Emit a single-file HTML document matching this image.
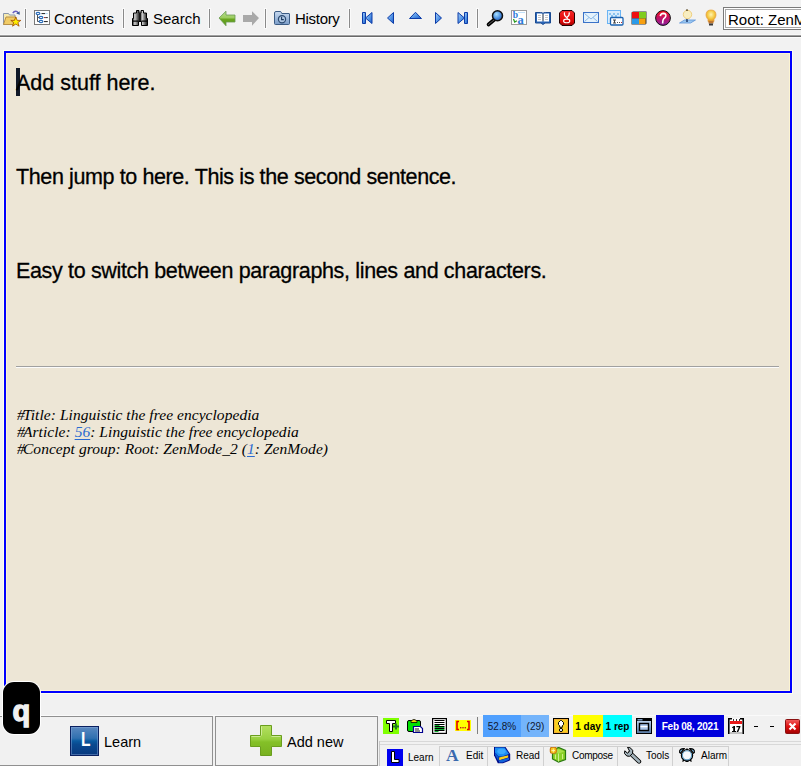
<!DOCTYPE html>
<html><head><meta charset="utf-8">
<style>
html,body{margin:0;padding:0}
body{width:801px;height:766px;position:relative;overflow:hidden;background:#f2f2f2;font-family:"Liberation Sans",sans-serif;color:#000}
.a{position:absolute}
.sep{position:absolute;top:9px;width:1px;height:19px;background:#8a8a8a;box-shadow:0 0 0 1px #fafafa}
.tl{position:absolute;top:10px;font-size:15px;line-height:18px;color:#000;white-space:nowrap}
svg{position:absolute;overflow:visible}
.st{position:absolute;font-size:10px;line-height:22px;top:715px;height:21px;padding-top:1px;text-align:center;white-space:nowrap}
.tab{position:absolute;font-size:10px;white-space:nowrap}
</style></head><body>

<!-- ===== TOOLBAR ===== -->
<div class="a" style="left:0;top:34px;width:801px;height:1px;background:#f8f8f8"></div>
<div class="a" style="left:0;top:35px;width:801px;height:1px;background:#a0a0a0"></div>
<div class="a" style="left:0;top:36px;width:801px;height:1px;background:#696969"></div>
<div class="a" style="left:0;top:37px;width:801px;height:1px;background:#fdfdfd"></div>

<div class="sep" style="left:25px"></div>
<div class="sep" style="left:123px"></div>
<div class="sep" style="left:209px"></div>
<div class="sep" style="left:265px"></div>
<div class="sep" style="left:349px"></div>
<div class="sep" style="left:477px"></div>


<!-- toolbar icons -->
<svg style="left:2px;top:8px" width="20" height="20" viewBox="0 0 20 20">
 <path d="M1.5 5.5h5l1 1.5h5.5v9.5h-11.5z" fill="#f6eab0" stroke="#8a96aa"/>
 <path d="M1.5 16.5l2.5-7.5h10l-2.5 7.5z" fill="#f2cc66" stroke="#b89048"/>
 <path d="M10.8 5.2c1.5-2.6 4.2-2.6 5.4-0.2" fill="none" stroke="#6a60c0" stroke-width="1.4"/>
 <path d="M14.2 5.6l3.4-2.4 0.2 3.6z" fill="#3a5a98"/>
 <path d="M13.8 9l1.4 3.4h3.6l-2.9 2.2 1.2 3.6-3.3-2.2-3.3 2.2 1.2-3.6-2.9-2.2h3.6z" fill="#fff000" stroke="#a04800" stroke-width="0.8" stroke-linejoin="round"/>
</svg>
<svg style="left:34px;top:10px" width="16" height="15" viewBox="0 0 16 15">
 <rect x="0.5" y="0.5" width="15" height="14" fill="#fff" stroke="#7a7a7a"/>
 <path d="M3.5 4v7.5h2" fill="none" stroke="#555"/>
 <path d="M3.5 7.5h2" fill="none" stroke="#555"/>
 <g fill="#fff" stroke="#2a6cb8" stroke-width="1.2">
 <ellipse cx="4" cy="3.5" rx="1.9" ry="1.2"/>
 <ellipse cx="7" cy="7.5" rx="1.9" ry="1.2"/>
 <ellipse cx="7" cy="11.5" rx="1.9" ry="1.2"/>
 </g>
 <rect x="7.5" y="3" width="3.5" height="1.1" fill="#333"/><rect x="11" y="3" width="2.8" height="1.1" fill="#b8d8f0"/>
 <rect x="10" y="7" width="1.2" height="1.1" fill="#c03030"/><rect x="11.2" y="7" width="2.6" height="1.1" fill="#444"/>
 <rect x="10" y="11" width="3.8" height="1.1" fill="#333"/>
</svg>
<svg style="left:132px;top:10px" width="16" height="16" viewBox="0 0 16 16">
 <defs><linearGradient id="bino" x1="0" x2="1"><stop offset="0" stop-color="#1a1a1a"/><stop offset="0.3" stop-color="#d0d0d0"/><stop offset="0.65" stop-color="#6a6a6a"/><stop offset="1" stop-color="#101010"/></linearGradient></defs>
 <path d="M4.5 0.5h2.5v2.5h1v8.5h-1.5v4h-6v-7h1v-5.5h3z" fill="url(#bino)" stroke="#000"/>
 <path d="M11.5 0.5h-2.5v2.5h-1v8.5h1.5v4h6v-7h-1v-5.5h-3z" fill="url(#bino)" stroke="#000"/>
 <rect x="7" y="3" width="2" height="8" fill="#1a1a1a"/>
 <rect x="0.5" y="10.5" width="6" height="1.2" fill="#000"/><rect x="9.5" y="10.5" width="6" height="1.2" fill="#000"/>
</svg>
<svg style="left:218px;top:10px" width="18" height="16" viewBox="0 0 18 16">
 <defs><linearGradient id="ga" x1="0" y1="0" x2="0" y2="1"><stop offset="0" stop-color="#b8e090"/><stop offset="0.45" stop-color="#9ccc60"/><stop offset="0.55" stop-color="#6aa620"/><stop offset="1" stop-color="#5a9818"/></linearGradient></defs>
 <path d="M1 8l7-6.8v3.8h9v7h-9v3.8z" fill="url(#ga)" stroke="#6a9a50" stroke-width="0.8" stroke-linejoin="round"/>
</svg>
<svg style="left:242px;top:10px" width="18" height="16" viewBox="0 0 18 16">
 <path d="M17 8l-7-6.8v3.8h-9v7h9v3.8z" fill="#a9a9a9"/>
</svg>
<svg style="left:274px;top:11px" width="16" height="14" viewBox="0 0 16 14">
 <defs><linearGradient id="hf" x1="0" y1="0" x2="0" y2="1"><stop offset="0" stop-color="#c8daf0"/><stop offset="1" stop-color="#7a9cc8"/></linearGradient></defs>
 <path d="M0.5 2q0-1.5 1.5-1.5h4q1 0 1.3 0.8l0.5 1.2h7.2q0.5 0 0.5 0.5v9.5q0 1-1 1h-13q-1 0-1-1z" fill="url(#hf)" stroke="#3c5c84"/>
 <circle cx="8" cy="8.2" r="3.6" fill="#b0c8e4" stroke="#2c4a70" stroke-width="1.2"/>
 <path d="M7.6 5.8v2.8h2.2" fill="none" stroke="#1c3a60" stroke-width="1.1"/>
</svg>
<svg style="left:361px;top:11px" width="110" height="14" viewBox="0 0 110 14">
 <defs><linearGradient id="nv" x1="0" y1="0" x2="1" y2="1"><stop offset="0" stop-color="#a8d0f8"/><stop offset="0.5" stop-color="#5a9ae8"/><stop offset="1" stop-color="#1a5cc8"/></linearGradient></defs>
 <g stroke="#0c3ca8" stroke-width="1" fill="url(#nv)" stroke-linejoin="round">
 <rect x="1.5" y="1.5" width="3" height="11"/>
 <path d="M4.5 7l6.5-5.5v11z"/>
 <path d="M26.5 7l6-5.5v11z"/>
 <path d="M48.5 7.5l6-6.2 6 6.2z"/>
 <path d="M80.5 7l-6-5.5v11z"/>
 <path d="M103.5 7l-6.5-5.5v11z"/>
 <rect x="103.5" y="1.5" width="3" height="11"/>
 </g>
</svg>
<svg style="left:486px;top:9px" width="18" height="18" viewBox="0 0 18 18">
 <defs><radialGradient id="lens" cx="0.4" cy="0.35" r="0.7"><stop offset="0" stop-color="#a8e0ff"/><stop offset="0.6" stop-color="#4a8ee0"/><stop offset="1" stop-color="#2a5aa8"/></radialGradient></defs>
 <path d="M8.5 10.5l-6 5" stroke="#000" stroke-width="3.6" stroke-linecap="round"/>
 <path d="M8 11l-5.5 4.5" stroke="#666" stroke-width="0.9" stroke-linecap="round"/>
 <circle cx="11.5" cy="6.8" r="5" fill="url(#lens)" stroke="#111" stroke-width="1.5"/>
</svg>
<svg style="left:511px;top:10px" width="16" height="15" viewBox="0 0 16 15">
 <rect x="0.5" y="0.5" width="15" height="14" fill="#fff" stroke="#9a9a9a"/>
 <rect x="7" y="2" width="7" height="1" fill="#c0e0f8"/>
 <text x="1.8" y="8" font-family="Liberation Serif" font-weight="bold" font-size="9.5" fill="#2a78d8">b</text>
 <text x="6.5" y="13.8" font-family="Liberation Serif" font-weight="bold" font-size="12.5" fill="#2a78d8">a</text>
 <path d="M2.5 9l1.2 3 2.2-1.2" fill="none" stroke="#2a9a20" stroke-width="1.3"/>
</svg>
<svg style="left:535px;top:11px" width="16" height="14" viewBox="0 0 16 14">
 <path d="M0.5 1.5h5q2 0 2.5 1 0.5-1 2.5-1h5v10.5h-5.5l-2 1.5-2-1.5h-5.5z" fill="#2a66b8" stroke="#1a4a90"/>
 <path d="M2 2.5h4.5q1 0 1 1v7h-5.5z M14 2.5h-4.5q-1 0-1 1v7h5.5z" fill="#fff"/>
 <rect x="7.3" y="3" width="1.4" height="7" fill="#888"/>
 <path d="M3 4.5h3M3 6.5h3M3 8.5h3M10 4.5h3M10 6.5h3M10 8.5h3" stroke="#b8b8b8" stroke-width="0.8"/>
</svg>
<svg style="left:559px;top:10px" width="16" height="16" viewBox="0 0 16 16">
 <defs><linearGradient id="gg" x1="0" y1="0" x2="0" y2="1"><stop offset="0" stop-color="#f42828"/><stop offset="0.7" stop-color="#e00808"/><stop offset="1" stop-color="#a00000"/></linearGradient></defs>
 <path d="M3 0.5h10l2.5 2.5v10l-2.5 2.5h-10l-2.5-2.5v-10z" fill="url(#gg)" stroke="#200000" stroke-width="1"/>
 <path d="M5.6 2.4Q4.6 5.6 7.8 7.6Q10.8 5.6 10.2 2.4" fill="none" stroke="#fff" stroke-width="1.2"/>
 <path d="M7.8 7.6L8.6 9" stroke="#fff" stroke-width="1.1"/>
 <ellipse cx="7.7" cy="10.9" rx="3.1" ry="1.8" fill="none" stroke="#fff" stroke-width="1.1"/>
</svg>
<svg style="left:583px;top:12px" width="16" height="11" viewBox="0 0 16 11">
 <rect x="0.5" y="0.5" width="15" height="10" fill="#e4f2fc" stroke="#3a72c8"/>
 <path d="M1.5 1.5l6.5 5.5 6.5-5.5M1.5 9.5l4.5-4M14.5 9.5l-4.5-4" fill="none" stroke="#8ab8e8"/>
</svg>
<svg style="left:607px;top:10px" width="17" height="16" viewBox="0 0 17 16">
 <rect x="0.5" y="0.5" width="13" height="13" fill="#d8ecfc" stroke="#6ab4f4"/>
 <path d="M2 3h2v2h-2zM6 3h2v2h-2zM10 3h2v2h-2zM4 5h2v2h-2zM8 5h2v2h-2z" fill="#8ac4f0"/>
 <rect x="3.5" y="7.5" width="12.5" height="7.5" rx="1" fill="#fff" stroke="#1a62b0" stroke-width="1.3"/>
 <path d="M6 10h3M7.5 10v3M6 13h3" stroke="#444" stroke-width="1.1"/>
 <rect x="10" y="12" width="1" height="1" fill="#555"/><rect x="12" y="12" width="1" height="1" fill="#555"/><rect x="14" y="12" width="1" height="1" fill="#c03030"/>
</svg>
<svg style="left:631px;top:11px" width="16" height="14" viewBox="0 0 16 14">
 <path d="M0.5 1.5q1-1 2-1h13v12l-1 1h-14z" fill="#333"/>
 <rect x="1" y="1" width="7" height="6.5" fill="#ee1010"/>
 <rect x="8" y="1" width="7" height="6.5" fill="#80cc20"/>
 <rect x="1" y="7.5" width="7" height="5.5" fill="#2a9ae8"/>
 <rect x="8" y="7.5" width="6.5" height="5.5" fill="#f8a010"/>
</svg>
<svg style="left:655px;top:10px" width="16" height="16" viewBox="0 0 16 16">
 <defs><linearGradient id="hp" x1="0" y1="0" x2="0" y2="1"><stop offset="0" stop-color="#ff1010"/><stop offset="0.45" stop-color="#c81060"/><stop offset="1" stop-color="#8a20a0"/></linearGradient></defs>
 <circle cx="8" cy="8" r="7.4" fill="url(#hp)" stroke="#111" stroke-width="1"/>
 <path d="M5.3 6.2Q5.6 3.4 8.4 3.4Q11.2 3.6 10.8 6Q10.4 7.6 8.8 8.6Q7.6 9.8 7.6 13.6" fill="none" stroke="#fff" stroke-width="1.6"/>
</svg>
<svg style="left:679px;top:9px" width="17" height="17" viewBox="0 0 17 17">
 <path d="M0.5 14l5-3h11l-5 3z" fill="#9cc8f0" stroke="#5a92d8" stroke-width="0.8"/>
 <rect x="7" y="10" width="2" height="3" fill="#3a5a8a"/>
 <circle cx="8.5" cy="5.5" r="4.2" fill="#f8eec0" stroke="#f0d080"/>
 <rect x="7" y="0.5" width="2" height="1.2" fill="#504020"/>
</svg>
<svg style="left:705px;top:9px" width="12" height="17" viewBox="0 0 12 17">
 <defs><radialGradient id="bl" cx="0.5" cy="0.4" r="0.6"><stop offset="0" stop-color="#fff4b0"/><stop offset="0.6" stop-color="#f4c840"/><stop offset="1" stop-color="#e09028"/></radialGradient></defs>
 <path d="M6 1q5 0 5 5 0 2.5-2 4.5v2h-6v-2q-2-2-2-4.5 0-5 5-5z" fill="url(#bl)" stroke="#e8a848" stroke-width="0.8"/>
 <rect x="3.5" y="12" width="5" height="2.5" fill="#c07830"/>
 <rect x="4" y="14.5" width="4" height="2" fill="#3a3a3a"/>
</svg>

<div class="tl" style="left:54px">Contents</div>
<div class="tl" style="left:153px">Search</div>
<div class="tl" style="left:295px;letter-spacing:-0.3px">History</div>

<!-- combo -->
<div class="a" style="left:723px;top:7px;width:90px;height:21px;border:1px solid #7a7a7a;background:#fff"></div>
<div class="a" style="left:725px;top:9px;width:90px;height:17px;border:1px solid #a8a8a8;background:#fff"></div>
<div class="tl" style="left:728px;top:11px;font-size:15px">Root: ZenMode_2</div>

<!-- ===== EDITOR ===== -->
<div class="a" style="left:3px;top:50px;width:788px;height:642px;border:1px solid #fffff0"></div>
<div class="a" style="left:4px;top:51px;width:784px;height:638px;border:2px solid #0000ff;background:#ede6d6"></div>
<div class="a" style="left:6px;top:53px;width:782px;height:636px;border:1px solid #fcf4d2;box-sizing:border-box;width:784px;height:638px"></div>

<div class="a" style="left:16px;top:68px;width:4px;height:28px;background:#101828"></div>
<div class="a" id="l1" style="left:16px;top:69px;font-size:21.5px;line-height:28px;white-space:nowrap;-webkit-text-stroke:0.3px #000">Add stuff here.</div>
<div class="a" id="l2" style="left:16px;top:163px;letter-spacing:-0.39px;font-size:21.5px;line-height:28px;white-space:nowrap;-webkit-text-stroke:0.3px #000">Then jump to here. This is the second sentence.</div>
<div class="a" id="l3" style="left:16px;top:257px;letter-spacing:-0.345px;font-size:21.5px;line-height:28px;white-space:nowrap;-webkit-text-stroke:0.3px #000">Easy to switch between paragraphs, lines and characters.</div>

<div class="a" style="left:16px;top:366px;width:763px;height:1px;background:#a0a0a0"></div>
<div class="a" style="left:16px;top:367px;width:763px;height:1px;background:#fbfbfb"></div>

<div class="a" id="ref" style="left:17px;top:406px;font-family:'Liberation Serif',serif;font-style:italic;font-size:15.5px;line-height:17px;white-space:nowrap;letter-spacing:0.05px"><span style="letter-spacing:-1.8px">#</span>Title: Linguistic the free encyclopedia<br><span style="letter-spacing:-1.8px">#</span>Article: <span style="color:#2a6ad0;text-decoration:underline;text-underline-offset:2px">56</span>: Linguistic the free encyclopedia<br><span style="letter-spacing:-1.8px">#</span>Concept group: Root: ZenMode_2 (<span style="color:#2a6ad0;text-decoration:underline;text-underline-offset:2px">1</span>: ZenMode)</div>

<!-- ===== BOTTOM ===== -->
<div class="a" style="left:0;top:694px;width:801px;height:72px;background:#f1f1f1"></div>
<div class="a" style="left:0;top:715px;width:801px;height:1px;background:#fafafa"></div>
<div class="a" style="left:0;top:716px;width:213px;height:1px;background:#909090"></div><div class="a" style="left:215px;top:716px;width:163px;height:1px;background:#909090"></div>

<!-- buttons -->
<div class="a" style="left:-1px;top:716px;width:213px;height:49px;border:1px solid #909090;border-top:none;border-left:none"></div>
<div class="a" style="left:215px;top:716px;width:161px;height:49px;border:1px solid #909090;border-top:none"></div>
<div class="a" style="left:0;top:765px;width:213px;height:1px;background:#909090"></div><div class="a" style="left:215px;top:765px;width:163px;height:1px;background:#909090"></div>

<div class="a" style="left:70px;top:726px;width:27px;height:28px;border:1px solid #0a2060;background:linear-gradient(#5a88c0,#3070b0 40%,#0a5aa0 50%,#0a4a90 62%,#08387e);box-shadow:inset 0 0 0 1px rgba(140,170,220,0.45)"></div>
<div class="a" style="left:81px;top:727px;color:#fff;font-size:19.5px;font-weight:bold;line-height:24px;transform:scaleX(0.8);transform-origin:0 0">L</div>
<div class="a" style="left:104px;top:733px;font-size:14.5px;line-height:18px">Learn</div>

<svg style="left:250px;top:725px" width="32" height="31" viewBox="0 0 32 31">
<defs><linearGradient id="pl" x1="0" y1="0" x2="0" y2="1"><stop offset="0" stop-color="#b4e060"/><stop offset="0.45" stop-color="#98d040"/><stop offset="0.55" stop-color="#84c028"/><stop offset="1" stop-color="#78b020"/></linearGradient></defs>
<path d="M10.5 0.5h11v10h10v11h-10v9h-11v-9h-10v-11h10z" fill="url(#pl)" stroke="#6a9e1e"/>
<path d="M11.5 10.5v-9M1.5 11.5h9M21.5 11.5h9" stroke="#d8f0a8" stroke-width="0.8"/>
</svg>
<div class="a" style="left:287px;top:733px;font-size:14.5px;line-height:18px">Add new</div>

<!-- q block -->
<div class="a" style="left:3px;top:682px;width:37px;height:52px;border-radius:11px;background:#000;box-shadow:0 0 0 1px #fff"></div>
<div class="a" style="left:12.5px;top:696px;width:20px;color:#f0f0f0;font-size:29px;font-weight:bold;line-height:30px;-webkit-text-stroke:1.3px #f0f0f0">q</div>

<!-- status bar -->
<div class="a" style="left:379px;top:741px;width:422px;height:1px;background:#d8d8d8"></div>
<div class="a" style="left:379px;top:744px;width:422px;height:1px;background:#d8d8d8"></div>
<div class="a" style="left:379px;top:741px;width:1px;height:25px;background:#c8c8c8"></div>
<div class="a" style="left:477px;top:717px;width:1px;height:17px;background:#808080"></div>

<div class="st" style="left:483px;width:38px;background:#50a0fe;color:#101830">52.8%</div>
<div class="st" style="left:521px;width:27px;padding-left:1px;background:#74b4fb;color:#101830">(29)</div>
<div class="st" style="left:573px;width:30px;background:#ffff00;font-weight:bold">1 day</div>
<div class="st" style="left:603px;width:29px;background:#00ffff;font-weight:bold">1 rep</div>
<div class="st" style="left:656px;width:68px;background:#0000dc;color:#fff;font-weight:bold;letter-spacing:-0.25px">Feb 08, 2021</div>
<div class="a" style="left:754px;top:726px;width:4px;height:1px;background:#000"></div>
<div class="a" style="left:770px;top:726px;width:4px;height:1px;background:#000"></div>


<!-- status icons -->
<svg style="left:383px;top:718px" width="17" height="16" viewBox="0 0 17 16">
 <rect x="0" y="0" width="16" height="16" fill="#80ff00"/>
 <path d="M3.5 2.5h9v3h-3v8h-3v-8h-3z" fill="#fff" stroke="#000"/>
 <path d="M10 8.5h6M13 5.5v6" stroke="#207a20" stroke-width="2"/>
</svg>
<svg style="left:406px;top:718px" width="18" height="16" viewBox="0 0 18 16">
 <rect x="1.5" y="2.5" width="13" height="11" rx="1.5" fill="#00e000" stroke="#000"/>
 <path d="M5 4.5h6v-1q-1-2-3-2t-3 2z" fill="#f0e000" stroke="#000" stroke-width="0.8"/>
 <path d="M7.5 8.5h7l2 2v4h-9z" fill="#fff" stroke="#000090" stroke-width="1.2"/>
 <path d="M9 11h4M9 13h5" stroke="#000" stroke-width="0.9"/>
</svg>
<svg style="left:432px;top:718px" width="15" height="16" viewBox="0 0 15 16">
 <rect x="0.6" y="0.6" width="13.8" height="14.8" fill="#fff" stroke="#000" stroke-width="1.2"/>
 <path d="M2.5 2.5h10M2.5 4.5h10M2.5 6.5h10M2.5 8.5h10M2.5 10.5h10M2.5 12.5h10" stroke="#000" stroke-width="1"/>
 <path d="M2.5 7.5h5M2.5 9.5h10M2.5 11.5h10M2.5 13.5h4" stroke="#10b030" stroke-width="1"/>
</svg>
<svg style="left:455px;top:720px" width="16" height="11" viewBox="0 0 16 11">
 <rect x="0" y="0" width="16" height="11" fill="#ffff00"/>
 <path d="M4 1.5h-2v8h2M12 1.5h2v8h-2" fill="none" stroke="#e00000" stroke-width="1.6"/>
 <rect x="5" y="7" width="1.4" height="1.4" fill="#c02020"/><rect x="7.3" y="7" width="1.4" height="1.4" fill="#c02020"/><rect x="9.6" y="7" width="1.4" height="1.4" fill="#c02020"/>
</svg>
<svg style="left:553px;top:718px" width="16" height="16" viewBox="0 0 16 16">
 <rect x="0" y="0" width="16" height="16" fill="#000"/>
 <rect x="1" y="1" width="14" height="14" fill="#f4b030"/>
 <rect x="2" y="2" width="12" height="12" fill="#f8d020"/>
 <path d="M7.5 2.5h1l2 2v2l-1.2 1.3v1.5h-2.6v-1.5l-1.2-1.3v-2z" fill="#fff" stroke="#000"/>
 <circle cx="8" cy="12" r="1.6" fill="#fff" stroke="#000"/>
</svg>
<svg style="left:636px;top:718px" width="16" height="16" viewBox="0 0 16 16">
 <defs><linearGradient id="wn" x1="0" y1="0" x2="0" y2="1"><stop offset="0" stop-color="#b8d0ea"/><stop offset="1" stop-color="#5a7ca8"/></linearGradient></defs>
 <rect x="0" y="0" width="16" height="16" fill="#000"/>
 <rect x="1" y="3" width="14" height="12" fill="url(#wn)"/>
 <rect x="1.5" y="1" width="5" height="1.5" fill="#7a9ac0"/>
 <rect x="3.5" y="5.5" width="9" height="7" fill="#a8c4e8" stroke="#000" stroke-width="1.4"/>
 <rect x="4.5" y="8" width="7" height="1.3" fill="#fff"/>
</svg>
<svg style="left:728px;top:718px" width="16" height="16" viewBox="0 0 16 16">
 <rect x="0.5" y="0.5" width="15" height="15" fill="#fff"/>
 <path d="M0.8 0v16M15.2 0v16M0 0.8h4M12 0.8h4" stroke="#000" stroke-width="1.6"/>
 <rect x="2" y="3" width="12" height="3" fill="#e81818"/>
 <rect x="5" y="1" width="1" height="2" fill="#333"/><rect x="8" y="1" width="1" height="2" fill="#333"/><rect x="11" y="1" width="1" height="2" fill="#333"/>
 <path d="M4 9.2L5.8 8H7V13H8V14H4V13H5.2V9.6L4 10.2Z M8.4 8H12.4V9L10.2 14H8.6L10.8 9.2H8.4Z" fill="#000"/>
 <rect x="2" y="14.5" width="12" height="1" fill="#888"/>
</svg>
<svg style="left:785px;top:719px" width="15" height="15" viewBox="0 0 15 15">
 <defs><linearGradient id="cl" x1="0" y1="0" x2="0" y2="1"><stop offset="0" stop-color="#f06060"/><stop offset="0.5" stop-color="#e01010"/><stop offset="1" stop-color="#a00000"/></linearGradient></defs>
 <rect x="0.5" y="0.5" width="14" height="14" rx="1" fill="url(#cl)" stroke="#8a1010"/>
 <path d="M4.5 4.5l6 6M10.5 4.5l-6 6" stroke="#fff" stroke-width="2.2"/>
</svg>

<!-- tab icons -->
<svg style="left:387px;top:749px" width="16" height="17" viewBox="0 0 16 17">
 <rect x="0" y="0" width="16" height="17" fill="#0000f0"/>
 <path d="M4.5 2.5h3v8h4.5v3h-7.5z" fill="#fff" stroke="#000"/>
</svg>
<svg style="left:442px;top:744px" width="24" height="22" viewBox="0 0 24 22">
 <text x="10.3" y="16.9" text-anchor="middle" font-family="Liberation Serif" font-weight="bold" font-size="17.5" fill="#3a6aae">A</text>
</svg>
<svg style="left:490px;top:744px" width="24" height="22" viewBox="0 0 24 22">
 <path d="M4 2.5H15.2L20.2 10V16.3L13 19.3H7.8L4 11.2Z" fill="#000a88"/>
 <path d="M5 3.5H14.6L19 10L12.2 12.6H8.6L5 8.6Z" fill="#1a8cf2"/>
 <ellipse cx="11.5" cy="7.2" rx="4.2" ry="2.8" fill="#3aa8ff"/>
 <path d="M5 8.6L8.6 12.6V17.6L5 11Z" fill="#0a58d0"/>
 <path d="M9 13.6L18.2 11.2V13.4L9.2 16.2Z" fill="#f8d018"/>
 <path d="M9 16.6L19 13.8V15.8L12.6 18.4H9Z" fill="#1262d8"/>
</svg>
<svg style="left:546px;top:744px" width="24" height="22" viewBox="0 0 24 22">
 <path d="M6.5 6.5L12.5 3.5L19.5 6.5V15.5L12.5 18L6.5 15Z" fill="#8ad028" stroke="#2a7a10" stroke-width="1.2"/>
 <path d="M7.5 7.5L12.5 9.5L18.5 7.5L12.5 5Z" fill="#a8e048"/>
 <path d="M12.5 9.5V17.5" stroke="#c8f090" stroke-width="1"/>
 <path d="M9.5 10.5V15M16.5 10V15" stroke="#e0f8a0" stroke-width="0.8"/>
 <rect x="4.3" y="3.3" width="6" height="6" rx="1.8" fill="#f8c818" stroke="#c87010" stroke-width="1.1"/>
 <path d="M7.3 4.5V8.5M5.5 6.5H9" stroke="#fff8c0" stroke-width="0.8"/>
</svg>
<svg style="left:620px;top:744px" width="24" height="22" viewBox="0 0 24 22">
 <path d="M19 17.5L10 9" stroke="#000" stroke-width="4.4" stroke-linecap="round"/>
 <path d="M19 17.5L10 9" stroke="#a2b2ba" stroke-width="2.6" stroke-linecap="round"/>
 <path d="M7.5 3.2L9.8 3.5 12.8 6.3 12.5 9.5 9.5 12.3 6.8 12 4.5 9.5 4.8 6.8 7.5 9.2 9.6 7.2Z" fill="#a2b2ba" stroke="#000" stroke-width="1" stroke-linejoin="round"/>
</svg>
<svg style="left:675px;top:744px" width="24" height="22" viewBox="0 0 24 22">
 <path d="M4.6 8.5Q4 4.5 9.2 4.6L5.5 9.2Z" fill="#7ab8e0" stroke="#000" stroke-width="1.1"/>
 <path d="M19.4 8.5Q20 4.5 14.8 4.6L18.5 9.2Z" fill="#7ab8e0" stroke="#000" stroke-width="1.1"/>
 <rect x="11" y="4.6" width="2" height="1.5" fill="#000"/>
 <circle cx="12" cy="11.3" r="5.6" fill="#f4f8fc" stroke="#000" stroke-width="1.3"/>
 <circle cx="12" cy="11.3" r="4.6" fill="none" stroke="#5a98c0" stroke-width="1.1"/>
 <path d="M7.5 17.5L9 16M16.5 17.5L15 16M10.5 17.3H13.5" stroke="#000" stroke-width="1.3"/>
</svg>
<!-- tabs -->
<div class="a" style="left:439px;top:746px;width:1px;height:20px;background:#d0d0d0"></div>
<div class="a" style="left:487px;top:746px;width:1px;height:20px;background:#d0d0d0"></div>
<div class="a" style="left:543px;top:746px;width:1px;height:20px;background:#d0d0d0"></div>
<div class="a" style="left:617px;top:746px;width:1px;height:20px;background:#d0d0d0"></div>
<div class="a" style="left:672px;top:746px;width:1px;height:20px;background:#d0d0d0"></div>
<div class="a" style="left:728px;top:746px;width:1px;height:20px;background:#d0d0d0"></div>
<div class="a" style="left:440px;top:746px;width:289px;height:1px;background:#d0d0d0"></div>

<div class="tab" style="left:408px;top:752px">Learn</div>
<div class="tab" style="left:466px;top:750px">Edit</div>
<div class="tab" style="left:516px;top:750px">Read</div>
<div class="tab" style="left:572px;top:750px;letter-spacing:-0.3px">Compose</div>
<div class="tab" style="left:646px;top:750px">Tools</div>
<div class="tab" style="left:701px;top:750px">Alarm</div>

</body></html>
